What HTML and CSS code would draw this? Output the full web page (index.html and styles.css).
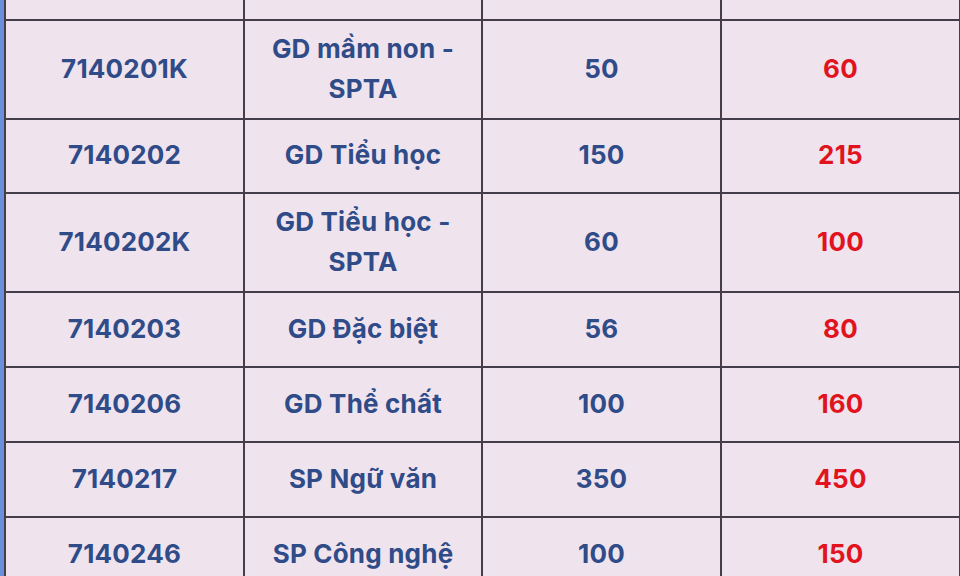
FILE: index.html
```html
<!DOCTYPE html>
<html lang="vi">
<head>
<meta charset="utf-8">
<title>Chỉ tiêu tuyển sinh</title>
<link rel="stylesheet" href="styles.css">
</head>
<body>
<div class="page">
  <div class="strip"></div>
  <table class="quota">
    <colgroup>
      <col class="c1"><col class="c2"><col class="c3"><col class="c4">
    </colgroup>
    <tbody>
      <tr class="r-top"><td></td><td></td><td></td><td></td></tr>
      <tr class="r-two"><td>7140201K</td><td>GD mầm non -<br>SPTA</td><td>50</td><td class="red">60</td></tr>
      <tr class="r-one r-first"><td>7140202</td><td>GD Tiểu học</td><td>150</td><td class="red">215</td></tr>
      <tr class="r-two"><td>7140202K</td><td>GD Tiểu học -<br>SPTA</td><td>60</td><td class="red">100</td></tr>
      <tr class="r-one"><td>7140203</td><td>GD Đặc biệt</td><td>56</td><td class="red">80</td></tr>
      <tr class="r-one"><td>7140206</td><td>GD Thể chất</td><td>100</td><td class="red">160</td></tr>
      <tr class="r-one"><td>7140217</td><td>SP Ngữ văn</td><td>350</td><td class="red">450</td></tr>
      <tr class="r-one"><td>7140246</td><td>SP Công nghệ</td><td>100</td><td class="red">150</td></tr>
    </tbody>
  </table>
</div>
</body>
</html>
```

FILE: styles.css
```css
html, body {
  margin: 0;
  padding: 0;
  background: #efe3ee;
  overflow: hidden;
}
.page {
  display: flex;
  width: 960px;
  height: 576px;
  overflow: hidden;
}
.strip {
  flex: 0 0 4px;
  background: #6b8fd9;
}
.quota {
  border-collapse: collapse;
  table-layout: fixed;
  width: 955px;
  flex: 0 0 955px;
  background: #efe3ee;
  align-self: flex-start;
}
.c1 { width: 239px; }
.c2 { width: 238px; }
.c3 { width: 239px; }
.c4 { width: 239px; }
.quota td {
  border: 2px solid #433e4a;
  padding: 0 0 2px;
  text-align: center;
  vertical-align: middle;
  font-family: Inter, "Noto Sans", sans-serif;
  font-weight: 700;
  font-size: 26px;
  line-height: 40px;
  letter-spacing: 0.2px;
  color: #2f4b88;
}
.quota .r-top td {
  border-top: none;
  height: 19px;
  padding: 0;
}
.quota .r-two td { height: 95px; }
.quota .r-one td { height: 71px; }
.quota .r-first td { height: 70px; }
.quota td.red { color: #e1141d; }
```
